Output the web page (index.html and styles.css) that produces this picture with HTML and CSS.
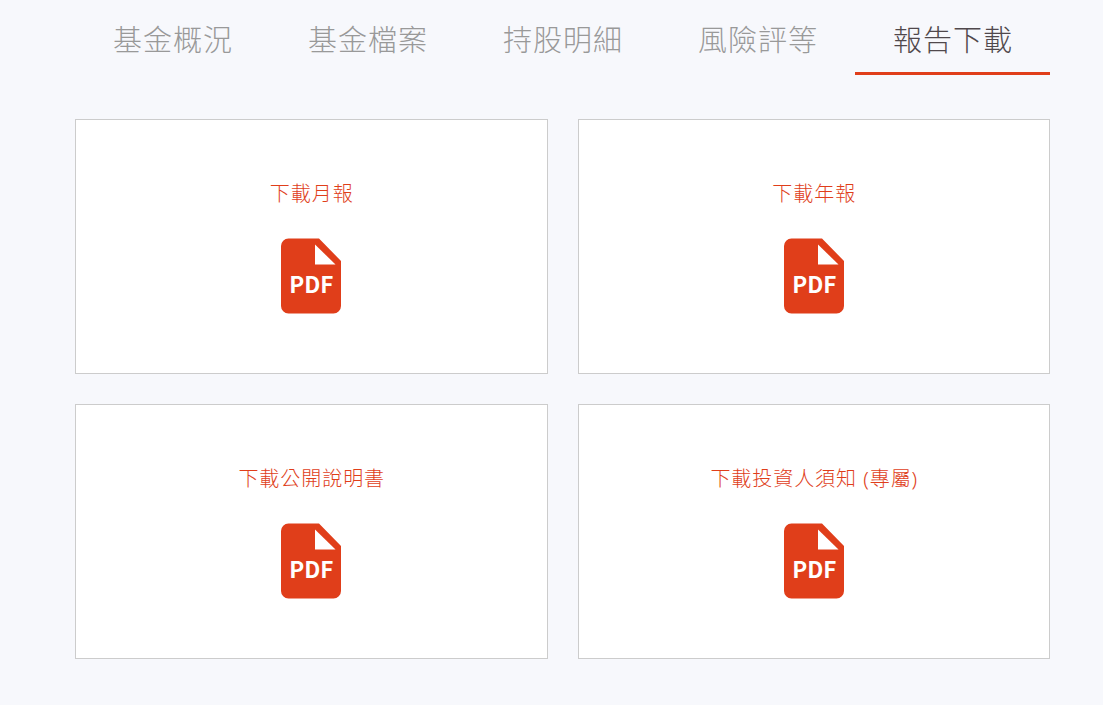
FILE: index.html
```html
<!DOCTYPE html>
<html lang="zh-Hant">
<head>
  <meta charset="UTF-8">
  <title>報告下載</title>
  <link rel="stylesheet" href="styles.css">
</head>
<body>

  <nav class="tabs">
    <a class="tab">基金概況</a>
    <a class="tab">基金檔案</a>
    <a class="tab">持股明細</a>
    <a class="tab">風險評等</a>
    <a class="tab active">報告下載</a>
  </nav>

  <main class="downloads">
    <a class="card">
      <span class="card-title">下載月報</span>
      <svg class="icon" viewBox="0 0 60 76">
        <path class="page" d="M7.500 .5H38l22 22.500v45a7.500 7.500 0 0 1-7.500 7.500h-45A7.500 7.500 0 0 1 0 68V8A7.500 7.500 0 0 1 7.500 .5z"/>
        <path class="fold" d="M34 6.500v20h20.500z"/>
        <text x="30.300" y="55" class="pdf-label">PDF</text>
      </svg>
    </a>
    <a class="card">
      <span class="card-title">下載年報</span>
      <svg class="icon" viewBox="0 0 60 76">
        <path class="page" d="M7.500 .5H38l22 22.500v45a7.500 7.500 0 0 1-7.500 7.500h-45A7.500 7.500 0 0 1 0 68V8A7.500 7.500 0 0 1 7.500 .5z"/>
        <path class="fold" d="M34 6.500v20h20.500z"/>
        <text x="30.300" y="55" class="pdf-label">PDF</text>
      </svg>
    </a>
    <a class="card">
      <span class="card-title">下載公開說明書</span>
      <svg class="icon" viewBox="0 0 60 76">
        <path class="page" d="M7.500 .5H38l22 22.500v45a7.500 7.500 0 0 1-7.500 7.500h-45A7.500 7.500 0 0 1 0 68V8A7.500 7.500 0 0 1 7.500 .5z"/>
        <path class="fold" d="M34 6.500v20h20.500z"/>
        <text x="30.300" y="55" class="pdf-label">PDF</text>
      </svg>
    </a>
    <a class="card">
      <span class="card-title">下載投資人須知 (專屬)</span>
      <svg class="icon" viewBox="0 0 60 76">
        <path class="page" d="M7.500 .5H38l22 22.500v45a7.500 7.500 0 0 1-7.500 7.500h-45A7.500 7.500 0 0 1 0 68V8A7.500 7.500 0 0 1 7.500 .5z"/>
        <path class="fold" d="M34 6.500v20h20.500z"/>
        <text x="30.300" y="55" class="pdf-label">PDF</text>
      </svg>
    </a>
  </main>

</body>
</html>
```

FILE: styles.css
```css
* {
  box-sizing: border-box;
}

body {
  margin: 0;
  padding: 5px 53px 0 75px;
  background-color: #f7f8fc;
  font-family: "Noto Sans CJK TC", sans-serif;
  font-weight: 300;
}

.tabs {
  display: flex;
}

.tab {
  flex: 1;
  height: 70px;
  padding-left: 1px;
  border-bottom: 3px solid transparent;
  color: #999;
  font-size: 29px;
  line-height: 66px;
  letter-spacing: 1px;
  text-align: center;
  white-space: nowrap;
}

.tab.active {
  color: #50484c;
  border-bottom-color: #e03e1a;
}

.downloads {
  display: grid;
  grid-template-columns: 1fr 1fr;
  gap: 30px;
  margin-top: 44px;
}

.card {
  display: flex;
  flex-direction: column;
  align-items: center;
  height: 255px;
  padding-top: 58px;
  border: 1px solid #ccc;
  background-color: #fff;
}

.card-title {
  height: 32px;
  padding-left: 1px;
  color: #e03e1a;
  font-family: "Noto Sans", "Noto Sans CJK TC", sans-serif;
  font-size: 20px;
  line-height: 32px;
  letter-spacing: 0.95px;
}

.icon {
  width: 60px;
  height: 76px;
  margin-top: 28px;
}

.page {
  fill: #e03e1a;
}

.fold {
  fill: #fff;
}

.pdf-label {
  fill: #fff;
  font-family: "Noto Sans CJK TC", sans-serif;
  font-size: 22.5px;
  font-weight: 700;
  text-anchor: middle;
}
```
